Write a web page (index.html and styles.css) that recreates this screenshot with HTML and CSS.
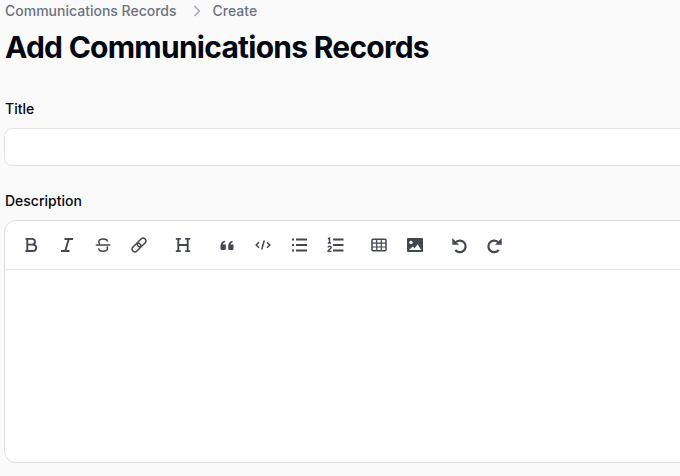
FILE: index.html
```html
<!DOCTYPE html>
<html lang="en">
<head>
<meta charset="utf-8">
<title>Add Communications Records</title>
<link rel="stylesheet" href="styles.css">
</head>
<body>
<main class="page">
  <nav class="crumbs">
    <span>Communications Records</span>
    <svg class="chev" viewBox="0 0 16 16"><path d="M5.500 3 10.500 8l-5 5" /></svg>
    <span>Create</span>
  </nav>
  <h1 class="heading">Add Communications Records</h1>
  <form class="form">
    <div class="field">
      <label class="label" for="title">Title</label>
      <input class="input" id="title" type="text">
    </div>
    <div class="field">
      <label class="label">Description</label>
      <div class="editor">
        <div class="toolbar">
          <div class="group">
            <button class="tool" type="button" aria-label="Bold"><svg viewBox="0 0 18 18"><path class="s" d="M3.500 2.900h6.200c2 0 3.300 1 3.300 2.900 0 1.800-1.300 2.800-3.300 2.800H5.300M5.300 8.600h5.300c2.200 0 3.600 1.100 3.600 3.100 0 2.100-1.400 3.300-3.600 3.300H3.500M5.300 2.900V15"/></svg></button>
            <button class="tool" type="button" aria-label="Italic"><svg viewBox="0 0 18 18"><path class="s" d="M6.500 3h8.500M3 15h8.500M10.800 3 7.200 15"/></svg></button>
            <button class="tool" type="button" aria-label="Strike"><svg viewBox="0 0 18 18"><path class="s t" d="M1.800 9h14.400M13.500 5.500C13.500 3.800 11.500 3 9 3 6.300 3 4.800 4.200 4.800 5.800c0 1 .4 1.800 1.200 2.200M4.700 12.300c.2 1.900 2.100 2.900 4.500 2.900 2.600 0 4.300-1.200 4.300-3 0-.6-.2-1.200-.5-1.700"/></svg></button>
            <button class="tool" type="button" aria-label="Link"><svg viewBox="0 0 18 18"><g class="s t"><rect x="1.500" y="8.700" width="10" height="5.600" rx="2.800" transform="rotate(-45 6.500 11.500)"/><rect x="6.500" y="3.700" width="10" height="5.600" rx="2.800" transform="rotate(-45 11.500 6.500)"/></g></svg></button>
          </div>
          <div class="group">
            <button class="tool" type="button" aria-label="Heading"><svg viewBox="0 0 18 18"><path class="s" d="M1.800 2.900h5M11.200 2.900h5M1.800 15.100h5M11.200 15.100h5M4.300 2.900v12.200M13.700 2.900v12.200M4.300 9h9.400"/></svg></button>
          </div>
          <div class="group">
            <button class="tool" type="button" aria-label="Quote"><svg viewBox="0 0 18 18"><path class="f" d="M7.800 8.400v4.100a1.600 1.600 0 0 1-1.600 1.600H4.100a1.600 1.600 0 0 1-1.600-1.600v-2.300c0-2.600 1.500-4.700 4-5.500l.7 1.400c-1.200.5-2 1.200-2.200 2.300h2.800zM15.500 8.400v4.100a1.600 1.600 0 0 1-1.600 1.600h-2.100a1.600 1.600 0 0 1-1.600-1.600v-2.300c0-2.600 1.500-4.700 4-5.500l.7 1.400c-1.200.5-2 1.200-2.200 2.300h2.800z"/></svg></button>
            <button class="tool" type="button" aria-label="Code"><svg viewBox="0 0 18 18"><path class="s t" d="M5 6.200 2.200 9 5 11.800M13 6.200 15.800 9 13 11.800M10.300 4.500l-2.600 9"/></svg></button>
            <button class="tool" type="button" aria-label="Bullets"><svg viewBox="0 0 18 18"><path class="s" d="M6 3.500h11M6 9h11M6 14.500h11"/><path class="s" d="M2 3.500h2M2 9h2M2 14.500h2"/></svg></button>
            <button class="tool" type="button" aria-label="Numbers"><svg viewBox="0 0 18 18"><path class="s" d="M7 3.500h10.500M7 9h10.500M7 14.500h10.500"/><path class="s d" d="M2 2.800 3.500 2v5M1.800 7h3.400M2 11.300c.3-1.400 3.200-1.400 3.200.3 0 1.400-3.200 2.200-3.200 3.800h3.400"/></svg></button>
          </div>
          <div class="group">
            <button class="tool" type="button" aria-label="Table"><svg viewBox="0 0 18 18"><rect class="s t" x="2" y="3.200" width="14" height="11.600" rx="1"/><path class="s n" d="M2 7.200h14M2 11h14M6.700 3.200v11.600M11.300 3.200v11.600"/></svg></button>
            <button class="tool" type="button" aria-label="Image"><svg viewBox="0 0 18 18"><path class="f" fill-rule="evenodd" d="M2 2h14a1 1 0 0 1 1 1v12a1 1 0 0 1-1 1H2a1 1 0 0 1-1-1V3a1 1 0 0 1 1-1zM5 4.700a1.700 1.700 0 1 0 0 3.400 1.700 1.700 0 0 0 0-3.400zM2.800 14h12.400l-3.600-5.800-3 4-1.800-1.800z"/></svg></button>
          </div>
          <div class="group">
            <button class="tool" type="button" aria-label="Undo"><svg viewBox="0 0 18 18"><path class="s u" d="M6 6A5.800 5.800 0 1 1 5.300 14"/><path class="f" d="M2.300 2v6.700H9z"/></svg></button>
            <button class="tool" type="button" aria-label="Redo"><svg viewBox="0 0 18 18"><path class="s u" d="M12 6A5.800 5.800 0 1 0 12.700 14"/><path class="f" d="M15.700 2v6.700H9z"/></svg></button>
          </div>
        </div>
        <div class="content"></div>
      </div>
    </div>
  </form>
</main>
</body>
</html>
```
FILE: styles.css
```css
* { box-sizing: border-box; }
html, body { margin: 0; height: 100%; overflow: hidden; background: #fafafa; }
body { font-family: Inter, "Liberation Sans", sans-serif; color: #030712; }
.page { width: 760px; padding-left: 4px; }
.crumbs { display: flex; align-items: center; gap: 12px; height: 20px; margin-left: 1px; margin-top: 1px; font-size: 14px; line-height: 20px; font-weight: 500; color: #6b7280; }
.chev { width: 16px; height: 16px; fill: none; stroke: #9ca3af; stroke-width: 1.300; margin-right: -4px; }
.heading { margin: 8px 0 0 1px; font-size: 30px; line-height: 36px; font-weight: 700; letter-spacing: -0.75px; color: #030712; }
.form { display: flex; flex-direction: column; gap: 25px; margin-top: 34px; }
.field { display: flex; flex-direction: column; gap: 9px; }
.label { display: block; margin-left: 1px; font-size: 14px; line-height: 20px; font-weight: 500; color: #030712; }
.input { display: block; width: 100%; height: 38px; border: 1px solid #e2e2e4; border-radius: 8px; background: #fff; outline: none; }
.editor { height: 243px; border: 1px solid #dfdfe1; border-radius: 12px; background: #fff; display: flex; flex-direction: column; }
.toolbar { display: flex; gap: 8px; height: 49px; padding: 8px 8px 0; border-bottom: 1px solid #e8e8ea; }
.group { display: flex; }
.tool { width: 36px; height: 32px; padding: 0; border: 0; background: none; display: flex; align-items: center; justify-content: center; }
.tool svg { width: 18px; height: 18px; display: block; }
.s { fill: none; stroke: #44474f; stroke-width: 1.900; }
.t { stroke-width: 1.500; }
.n { stroke-width: 1.200; }
.d { stroke-width: 1.400; }
.u { stroke-width: 2.200; }
.f { fill: #44474f; }
.content { flex: 1; }
```
